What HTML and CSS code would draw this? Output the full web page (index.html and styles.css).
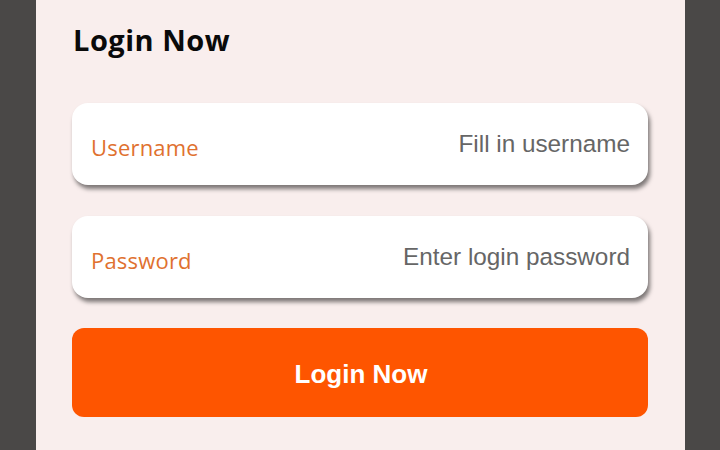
FILE: index.html
```html
<!DOCTYPE html>
<html lang="en">
<head>
<meta charset="utf-8">
<title>Login Now</title>
<link rel="stylesheet" href="styles.css">
</head>
<body>
<main class="panel">
  <h1 class="title">Login Now</h1>
  <form class="form">
    <label class="field">
      <span class="label">Username</span>
      <input class="input" type="text" placeholder="Fill in username">
    </label>
    <label class="field">
      <span class="label">Password</span>
      <input class="input" type="password" placeholder="Enter login password">
    </label>
    <button class="submit" type="button">Login Now</button>
  </form>
</main>
</body>
</html>
```
FILE: styles.css
```css
html, body {
  margin: 0;
  height: 100%;
}
body {
  background: #4a4847;
  overflow: hidden;
}
.panel {
  margin-left: 36px;
  width: 649px;
  height: 100%;
  box-sizing: border-box;
  background: #f9eeed;
  padding: 21px 37px 0 36px;
}
.title {
  margin: 0 0 0 1px;
  font-family: "Open Sans", sans-serif;
  font-weight: 700;
  font-size: 29px;
  letter-spacing: 0.5px;
  line-height: 38px;
  color: #0a0a0a;
}
.form {
  margin-top: 44px;
  display: flex;
  flex-direction: column;
}
.field {
  display: flex;
  align-items: center;
  height: 82px;
  background: #fff;
  border-radius: 16px;
  box-shadow: 2px 4px 4px rgba(0, 0, 0, 0.5);
  padding: 0 18px 0 19px;
  margin-bottom: 31px;
}
.label {
  flex: none;
  font-family: "Open Sans", sans-serif;
  font-size: 22px;
  letter-spacing: 0.2px;
  color: #e0712f;
  padding-top: 5px;
}
.input {
  flex: 1;
  min-width: 0;
  border: 0;
  outline: 0;
  background: transparent;
  text-align: right;
  font-family: "Liberation Sans", Arial, sans-serif;
  font-size: 24.3px;
  color: #333;
  padding: 0;
}
.input::placeholder {
  color: #666;
  opacity: 1;
}
.submit {
  margin-top: -1px;
  height: 89px;
  border: 0;
  border-radius: 12px;
  background: #fe5500;
  color: #fff;
  font-family: "Liberation Sans", Arial, sans-serif;
  font-weight: 700;
  font-size: 26px;
  padding: 4px 0 0 2px;
}
```
